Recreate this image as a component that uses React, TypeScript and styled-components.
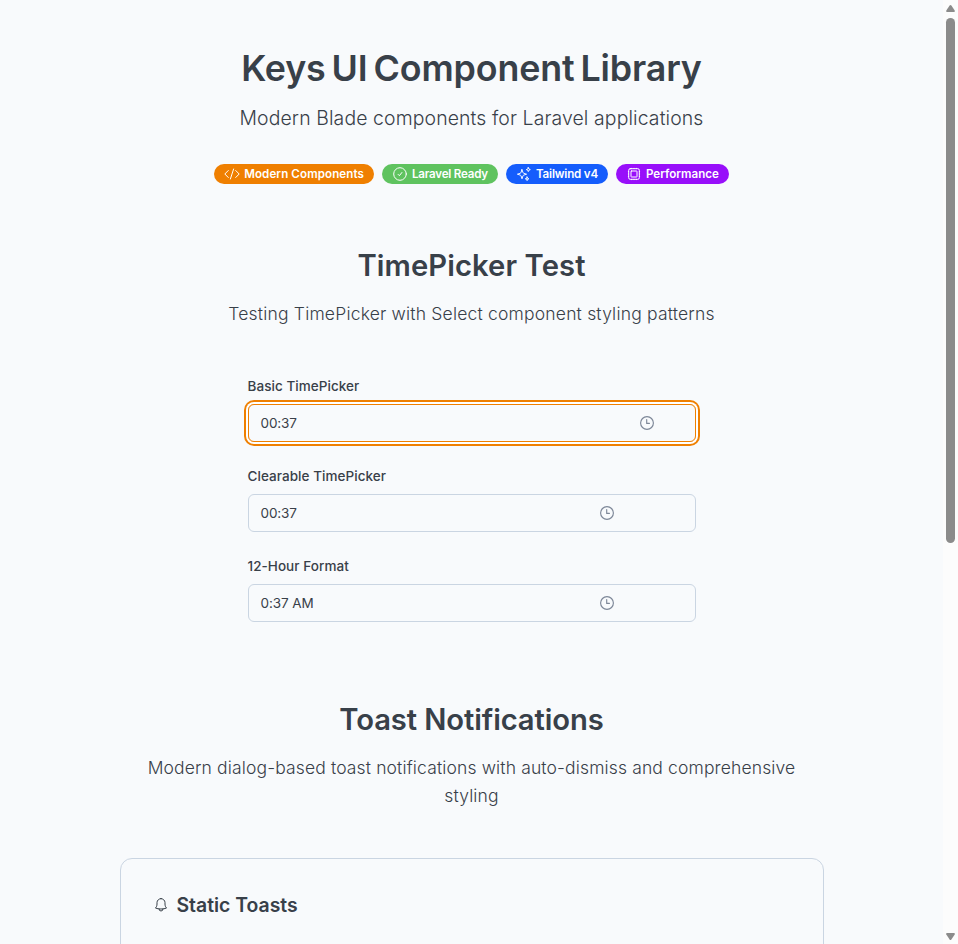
import React from 'react';
import styled, { createGlobalStyle, css } from 'styled-components';

const GlobalStyle = createGlobalStyle`
  *, *::before, *::after { box-sizing: border-box; }
  body {
    margin: 0;
    background: #f8fafc;
    color: #384049;
    font-family: Inter, "Liberation Sans", sans-serif;
    overflow: hidden;
  }
  h1, h2, h3, p { margin: 0; }
`;

const Viewport = styled.div`
  display: flex;
  height: 944px;
  overflow: hidden;
`;

const Page = styled.main`
  flex: 1;
  min-width: 0;
  display: flex;
  flex-direction: column;
  align-items: center;
  padding-top: 48px;
`;

type Tracked = { $tracking?: number };

const tracked = css<Tracked>`
  letter-spacing: ${({ $tracking = 0 }) => $tracking}px;
`;

const Hero = styled.header`
  display: flex;
  flex-direction: column;
  align-items: center;
  text-align: center;
`;

const HeroTitle = styled.h1`
  font-size: 35.8px;
  font-weight: 600;
  line-height: 40px;
  letter-spacing: -0.12px;
  word-spacing: -3px;
`;

const HeroText = styled.p`
  margin-top: 16px;
  font-size: 19.4px;
  font-weight: 300;
  line-height: 28px;
  letter-spacing: 0.12px;
`;

const BadgeRow = styled.div`
  display: flex;
  gap: 8px;
  margin-top: 32px;
`;

const Badge = styled.span<{ $color: string }>`
  display: inline-flex;
  align-items: center;
  gap: 4px;
  height: 20px;
  padding: 0 10px;
  border-radius: 10px;
  background: ${({ $color }) => $color};
  color: #fff;
`;

const BadgeLabel = styled.span<Tracked>`
  font-size: 11.6px;
  font-weight: 600;
  line-height: 16px;
  white-space: nowrap;
  ${tracked}
`;

const Section = styled.section<{ $gap: number }>`
  display: flex;
  flex-direction: column;
  align-items: center;
  width: 704px;
  margin-top: ${({ $gap }) => $gap}px;
`;

const SectionTitle = styled.h2<Tracked>`
  font-size: 29.2px;
  font-weight: 600;
  line-height: 36px;
  ${tracked}
`;

const SectionText = styled.p<Tracked>`
  max-width: 672px;
  margin-top: 16px;
  font-size: 17.5px;
  font-weight: 300;
  line-height: 28px;
  text-align: center;
  ${tracked}
`;

const Form = styled.div`
  display: flex;
  flex-direction: column;
  gap: 24px;
  width: 448px;
  margin-top: 48px;
`;

const Field = styled.div`
  display: flex;
  flex-direction: column;
  gap: 8px;
`;

const FieldLabel = styled.label`
  font-size: 13.5px;
  font-weight: 500;
  line-height: 20px;
  letter-spacing: 0.05px;
`;

const TimeInput = styled.div<{ $focused?: boolean; $inset: number }>`
  display: flex;
  align-items: center;
  justify-content: space-between;
  height: 38px;
  padding: 0 ${({ $inset }) => $inset}px 0 12px;
  border: 1px solid ${({ $focused }) => ($focused ? '#ef7f00' : '#cad5e2')};
  border-radius: 6px;
  ${({ $focused }) => $focused && css`
    box-shadow: 0 0 0 2px #fff, 0 0 0 4px #ef7f00;
  `}
`;

const TimeValue = styled.span`
  font-size: 13.5px;
  line-height: 20px;
  letter-spacing: -0.1px;
`;

const Card = styled.div`
  width: 100%;
  height: 240px;
  margin-top: 48px;
  padding: 32px;
  border: 1px solid #cad5e2;
  border-radius: 12px;
`;

const CardHeading = styled.div`
  display: flex;
  align-items: center;
  gap: 8px;
`;

const CardTitle = styled.h3`
  font-size: 19.4px;
  font-weight: 600;
  line-height: 28px;
`;

const ScrollTrack = styled.div`
  display: flex;
  flex-direction: column;
  align-items: center;
  width: 15px;
  padding: 5px 0 4px;
  background: #fcfcfc;
`;

const ScrollThumb = styled.div`
  width: 9px;
  height: 525px;
  margin: 6px 0 auto;
  border-radius: 5px;
  background: #8b8b8b;
`;

const Arrow = styled.svg<{ $down?: boolean }>`
  display: block;
  flex: none;
  transform: ${({ $down }) => ($down ? 'rotate(180deg)' : 'none')};
`;

const Icon = styled.svg`
  display: block;
  flex: none;
  width: 16px;
  height: 16px;
  fill: none;
  stroke: currentColor;
  stroke-linecap: round;
  stroke-linejoin: round;
`;

const MutedIcon = styled(Icon)`
  color: #7d8798;
`;

const CodeIcon = () => (
  <Icon viewBox="0 0 16 16" strokeWidth="1">
    <path d="M4.3 4.5 .8 8l3.5 3.5M11.7 4.5 15.2 8l-3.5 3.5M9.6 3 6.4 13" />
  </Icon>
);

const CheckIcon = () => (
  <Icon viewBox="0 0 16 16" strokeWidth="1">
    <circle cx="8" cy="8" r="6.3" />
    <path d="m6.1 8.4 1.3 1.3 2.5-3.2" />
  </Icon>
);

const SparklesIcon = () => (
  <Icon viewBox="0 0 16 16" strokeWidth="0.95">
    <path d="M6 3.6 6.9 6.4a1.5 1.5 0 0 0 .9.9l2.8.9-2.8.9a1.5 1.5 0 0 0-.9.9L6 12.8l-.9-2.8a1.5 1.5 0 0 0-.9-.9l-2.8-.9 2.8-.9a1.5 1.5 0 0 0 .9-.9z" />
    <path d="m12.3 1.6.6 1.4 1.4.6-1.4.6-.6 1.4-.6-1.4-1.4-.6 1.4-.6zM11.100 11l.5 1.300 1.300.5-1.300.5-.5 1.300-.5-1.300-1.300-.5 1.300-.5z" />
  </Icon>
);

const ChipIcon = () => (
  <Icon viewBox="0 0 16 16" strokeWidth="1">
    <rect x="2.7" y="2.7" width="10.6" height="10.6" rx="1.5" />
    <rect x="5" y="5" width="6" height="6" rx=".4" />
    <path strokeWidth=".7" d="M5.5 2.3v.4M8 2.3v.4M10.5 2.3v.4M5.5 13.3v.4M8 13.3v.4M10.5 13.3v.4M2.3 5.5h.4M2.3 8h.4M2.3 10.5h.4M13.3 5.5h.4M13.3 8h.4M13.3 10.5h.4" />
  </Icon>
);

const ClockIcon = () => (
  <MutedIcon viewBox="0 0 16 16" strokeWidth="1.15">
    <circle cx="8" cy="8" r="6.4" />
    <path d="M7.7 4.6v3.8h2.7" />
  </MutedIcon>
);

const BellIcon = () => (
  <Icon viewBox="0 0 16 16" strokeWidth="1">
    <path d="M8 1.6a4 4 0 0 0-4 4V7c0 1.8-.5 3-1.6 4 .9.4 2.1.7 3.6.9 1.3.15 2.7.15 4 0 1.5-.2 2.7-.5 3.6-.9C12.5 10 12 8.8 12 7V5.6a4 4 0 0 0-4-4z" />
    <path d="M6 12a2 2 0 0 0 4 0" />
  </Icon>
);

const ScrollArrow = ({ down }: { down?: boolean }) => (
  <Arrow $down={down} width="9" height="7" viewBox="0 0 9 7">
    <path d="M4.5 0Q5 0 5.4.6L8.7 5.6Q9.2 7 8 7H1Q-.2 7 .3 5.6L3.6.6Q4 0 4.5 0Z" fill="#8b8b8b" />
  </Arrow>
);

const badges = [
  { label: 'Modern Components', color: '#ef7f00', tracking: 0.09, icon: <CodeIcon /> },
  { label: 'Laravel Ready', color: '#5fc35f', tracking: -0.215, icon: <CheckIcon /> },
  { label: 'Tailwind v4', color: '#155dfc', tracking: -0.19, icon: <SparklesIcon /> },
  { label: 'Performance', color: '#980ffa', tracking: 0, icon: <ChipIcon /> },
];

const fields = [
  { label: 'Basic TimePicker', value: '00:37', inset: 40, focused: true },
  { label: 'Clearable TimePicker', value: '00:37', inset: 80 },
  { label: '12-Hour Format', value: '0:37 AM', inset: 80 },
];

export default function App() {
  return (
    <>
      <GlobalStyle />
      <Viewport>
        <Page>
          <Hero>
            <HeroTitle>Keys UI Component Library</HeroTitle>
            <HeroText>Modern Blade components for Laravel applications</HeroText>
            <BadgeRow>
              {badges.map((b) => (
                <Badge key={b.label} $color={b.color}>
                  {b.icon}
                  <BadgeLabel $tracking={b.tracking}>{b.label}</BadgeLabel>
                </Badge>
              ))}
            </BadgeRow>
          </Hero>

          <Section $gap={64}>
            <SectionTitle $tracking={0.1}>TimePicker Test</SectionTitle>
            <SectionText $tracking={0.19}>
              Testing TimePicker with Select component styling patterns
            </SectionText>
            <Form>
              {fields.map((f) => (
                <Field key={f.label}>
                  <FieldLabel>{f.label}</FieldLabel>
                  <TimeInput $focused={f.focused} $inset={f.inset}>
                    <TimeValue>{f.value}</TimeValue>
                    <ClockIcon />
                  </TimeInput>
                </Field>
              ))}
            </Form>
          </Section>

          <Section $gap={80}>
            <SectionTitle $tracking={-0.1}>Toast Notifications</SectionTitle>
            <SectionText $tracking={0.135}>
              Modern dialog-based toast notifications with auto-dismiss and comprehensive styling
            </SectionText>
            <Card>
              <CardHeading>
                <BellIcon />
                <CardTitle>Static Toasts</CardTitle>
              </CardHeading>
            </Card>
          </Section>
        </Page>
        <ScrollTrack>
          <ScrollArrow />
          <ScrollThumb />
          <ScrollArrow down />
        </ScrollTrack>
      </Viewport>
    </>
  );
}
